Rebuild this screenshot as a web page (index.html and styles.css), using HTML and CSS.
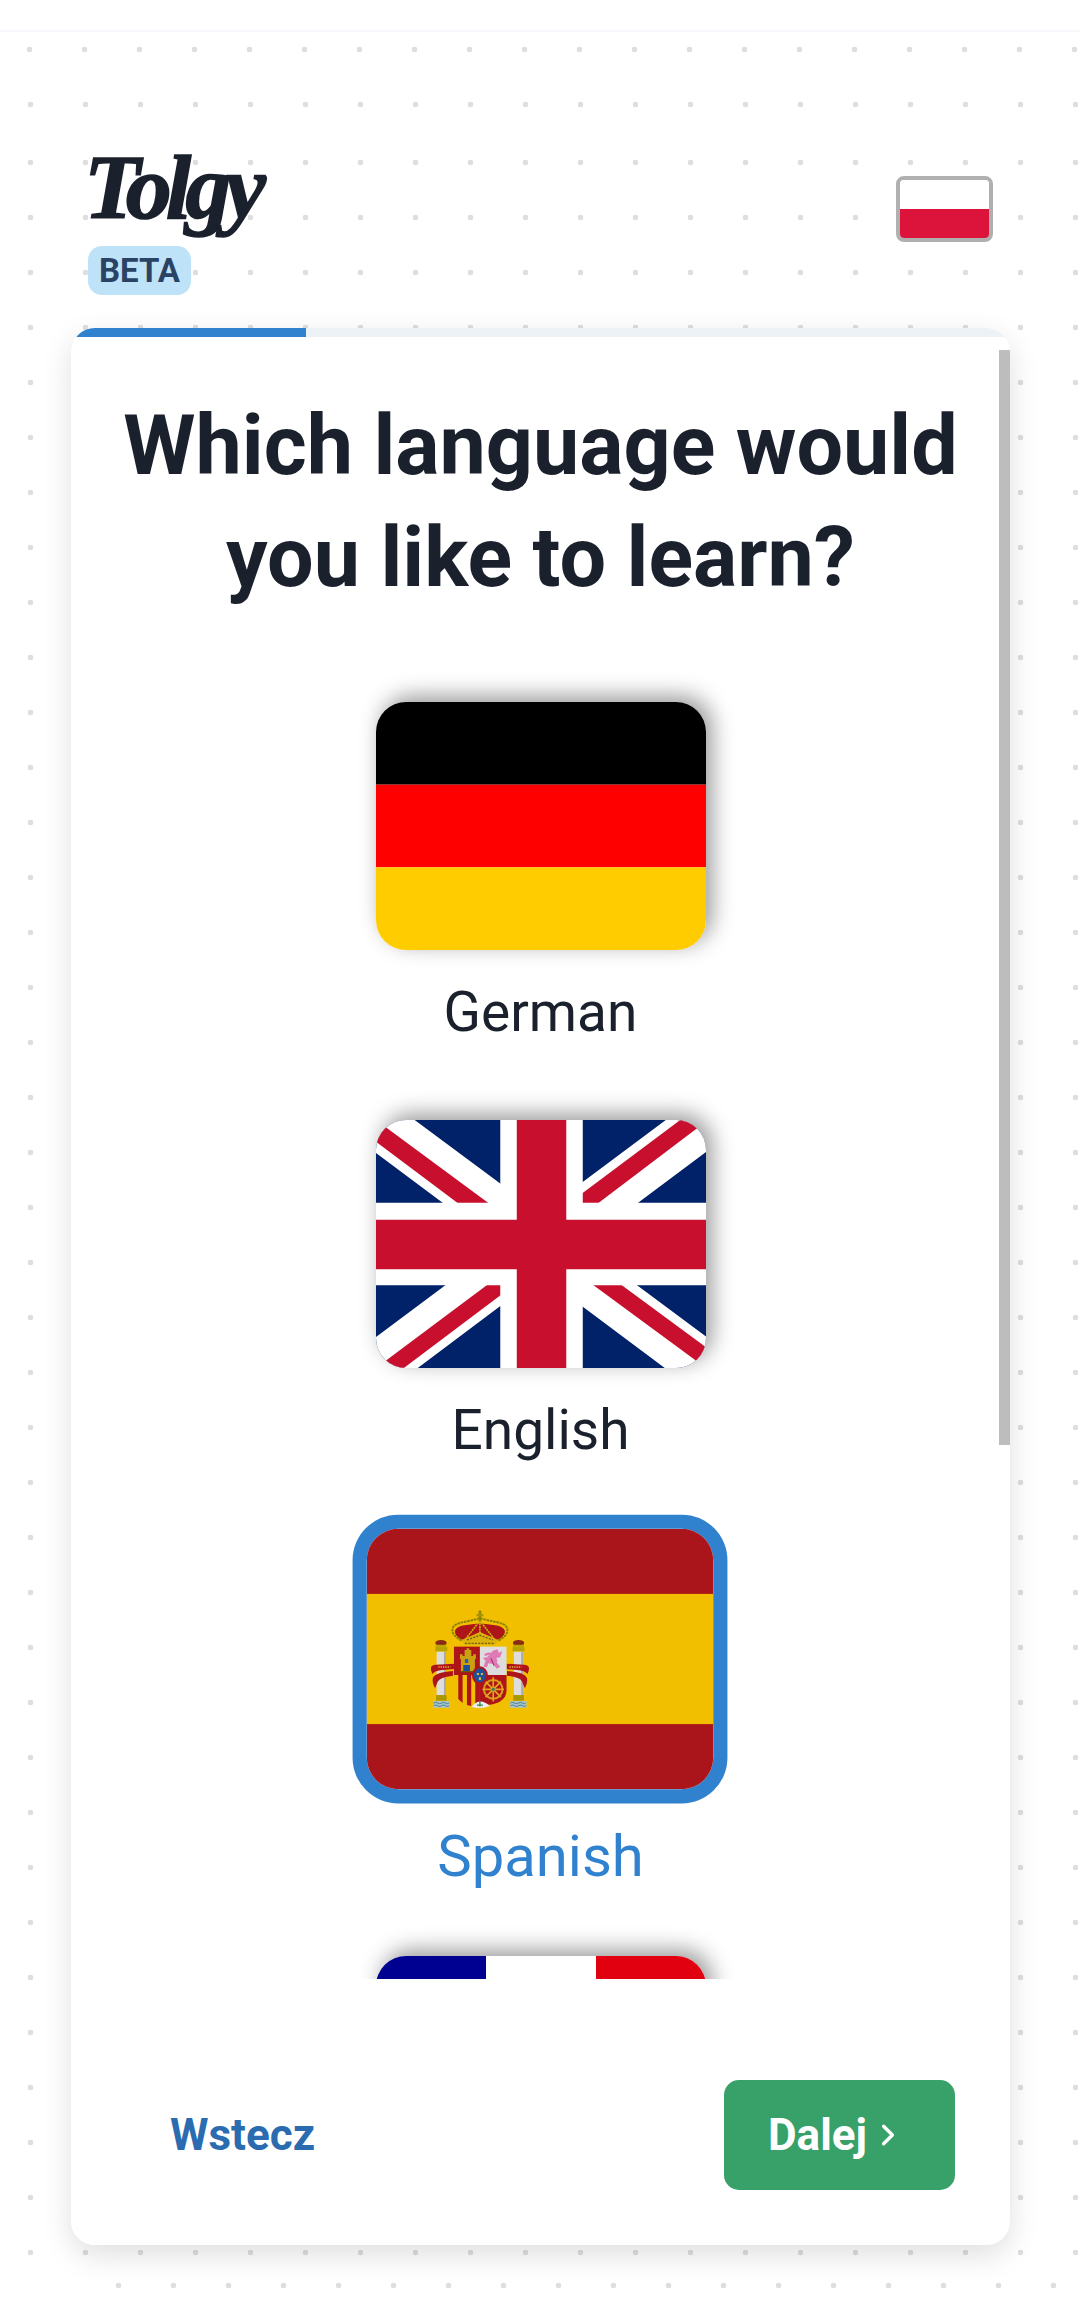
FILE: index.html
```html
<!DOCTYPE html>
<html lang="en">
<head>
<meta charset="utf-8">
<title>Tolgy</title>
<link rel="stylesheet" href="styles.css">
</head>
<body>
<div class="dots dots-main"></div>
<div class="dots dots-row-a"></div>
<div class="dots dots-row-b"></div>
<div class="dots dots-row-c"></div>
<div class="topbar"></div>
<header class="header">
  <div class="brand">
    <div class="logo">Tolgy</div>
    <span class="beta">BETA</span>
  </div>
  <div class="locale"><div class="locale-white"></div><div class="locale-red"></div></div>
</header>
<main class="card">
  <div class="progress"><div class="progress-fill"></div></div>
  <div class="scroller">
    <h1 class="title">Which language would<br>you like to learn?</h1>
    <div class="langs">
      <div class="lang">
        <div class="flag">
          <svg viewBox="0 0 3 3" preserveAspectRatio="none"><rect width="3" height="1" fill="#000"/><rect y="1" width="3" height="1" fill="#f00"/><rect y="2" width="3" height="1" fill="#fc0"/></svg>
        </div>
        <div class="lang-name">German</div>
      </div>
      <div class="lang">
        <div class="flag">
          <svg viewBox="0 0 640 480" preserveAspectRatio="none">
            <path fill="#012169" d="M0 0h640v480H0z"/>
            <path fill="#FFF" d="m75 0 244 181L562 0h78v62L400 241l240 178v61h-80L320 301 81 480H0v-60l239-178L0 64V0z"/>
            <path fill="#C8102E" d="m424 281 216 159v40L369 281zm-184 20 6 35L54 480H0zM640 0v3L391 191l2-44L590 0zM0 0l239 176h-60L0 42z"/>
            <path fill="#FFF" d="M241 0v480h160V0zM0 160v160h640V160z"/>
            <path fill="#C8102E" d="M0 193v96h640v-96zM273 0v480h96V0z"/>
          </svg>
        </div>
        <div class="lang-name">English</div>
      </div>
      <div class="lang lang-selected">
        <div class="flag">
          <svg viewBox="0 0 347 260" preserveAspectRatio="none">
            <rect width="347" height="260" fill="#aa151b"/>
            <rect y="65" width="347" height="130" fill="#f1bf00"/>
            <g transform="translate(45 61) scale(.3333)">
              <!-- pillars -->
              <rect x="75" y="185" width="28" height="130" fill="#ddd"/>
              <rect x="97" y="185" width="6" height="130" fill="#aaa"/>
              <rect x="307" y="185" width="28" height="130" fill="#ddd"/>
              <rect x="329" y="185" width="6" height="130" fill="#aaa"/>
              <rect x="71" y="171" width="36" height="13" fill="#b8a400"/>
              <rect x="303" y="171" width="36" height="13" fill="#b8a400"/>
              <rect x="73" y="315" width="32" height="17" fill="#ad9700"/>
              <rect x="305" y="315" width="32" height="17" fill="#ad9700"/>
              <rect x="64" y="333" width="49" height="20" fill="#a8c4cc"/>
              <rect x="296" y="333" width="49" height="20" fill="#a8c4cc"/>
              <path d="M66 339q6-4 12 0t12 0 12 0 10 0M66 347q6-4 12 0t12 0 12 0 10 0M297 339q6-4 12 0t12 0 12 0 10 0M297 347q6-4 12 0t12 0 12 0 10 0" fill="none" stroke="#1f5f73" stroke-width="2"/>
              <!-- small crowns -->
              <ellipse cx="88" cy="159" rx="17" ry="9" fill="#8a2a14"/>
              <path d="M72 164h32v6H72z" fill="#b8a400"/>
              <ellipse cx="321" cy="159" rx="17" ry="9" fill="#8a2a14"/>
              <path d="M305 164h32v6h-32z" fill="#b8a400"/>
              <!-- ribbons -->
              <path d="M58 232q3-8 14-8l56-3v16l-36 3q-22 2-30 12-6-12-4-20zM124 243v14q-40 4-46 18-2 6-8 20-10-20-6-32 8-16 60-20z" fill="#ad1519"/>
              <path d="M352 232q-3-8-14-8l-56-3v16l36 3q22 2 30 12 6-12 4-20zM286 243v14q40 4 46 18 2 6 8 20 10-20 6-32-8-16-60-20z" fill="#ad1519"/>
              <path d="M80 231h36M294 231h36" stroke="#e8b040" stroke-width="4" stroke-dasharray="4 3"/>
              <!-- great crown -->
              <path d="M130 122C138 102 175 106 205 100C235 106 272 102 280 122C282 135 268 148 255 150L155 150C142 148 128 135 130 122z" fill="#ad1519"/>
              <path d="M150 152Q118 135 123 116C128 94 170 98 205 84C240 98 282 94 287 116Q292 135 260 152" fill="none" stroke="#8f8400" stroke-width="6" stroke-dasharray="8 2"/>
              <path d="M205 92L160 150M205 92L250 150M205 92V130" fill="none" stroke="#c8b100" stroke-width="5" stroke-dasharray="6 2"/>
              <path d="M150 150L205 126L260 150L250 166H160z" fill="#d9b20c"/>
              <path d="M166 150l39-14 39 14M160 160h90" fill="none" stroke="#7a5a10" stroke-width="4" stroke-dasharray="6 4"/>
              <rect x="201" y="62" width="8" height="32" fill="#8f8400"/>
              <rect x="195" y="72" width="20" height="7" fill="#a89600"/>
              <!-- shield -->
              <path d="M127 170h158v125q0 55-79 55-79 0-79-55z" fill="#f1bf00"/>
              <rect x="127" y="170" width="78" height="85" fill="#ad1519"/>
              <rect x="205" y="170" width="80" height="85" fill="#ddd"/>
              <path d="M127 255h78v95q-78 0-78-55z" fill="#f1bf00"/>
              <path d="M140 255h13v84l-13-12zM166 255h13v93l-13-3zM191 255h14v93h-14z" fill="#ad1519"/>
              <path d="M205 255h80v45q0 46-80 46z" fill="#ad1519"/>
              <path d="M180 350q25-30 55-2-28 10-55 2z" fill="#eee"/>
              <path d="M205 333v16M196 345h18" stroke="#39805a" stroke-width="4"/>
              <!-- castle -->
              <path d="M148 245v-38h-3v-14h8v5h6v-18h6v-5h8v5h6v18h6v-5h8v14h-3v38z" fill="#c8a010"/>
              <path d="M155 245v-20h20v20z" fill="#1d4f9c"/>
              <path d="M160 207h10v12h-10z" fill="#2a5fb0"/>
              <path d="M146 245h38" stroke="#6b5a10" stroke-width="4"/>
              <!-- lion -->
              <path d="M218 192q8-6 20-4l6-6 14-4 4 10 10-4-6 18-12 2q6 6 2 14l10 12-10 6-12-14-14-2-4 12-10-2 6-18-8-8 12-2 8-8-14 4z" fill="#e07ab4"/>
              <path d="M238 205l10 22" stroke="#a03070" stroke-width="3"/>
              <!-- navarra chains -->
              <circle cx="245" cy="298" r="28" fill="none" stroke="#d99a1a" stroke-width="6"/>
              <path d="M245 262v72M213 298h64M222 275l46 46M268 275l-46 46" stroke="#e2a41e" stroke-width="5"/>
              <circle cx="245" cy="298" r="5" fill="#39805a"/>
              <!-- centre -->
              <ellipse cx="205" cy="256" rx="24" ry="27" fill="#ad1519"/>
              <ellipse cx="205" cy="256" rx="18" ry="21" fill="#1d4f9c"/>
              <path d="M196 249h6v6h-6zM208 249h6v6h-6zM202 262h6v8h-6z" fill="#e8c020"/>
            </g>
          </svg>
        </div>
        <div class="lang-name">Spanish</div>
      </div>
      <div class="lang">
        <div class="flag">
          <svg viewBox="0 0 3 3" preserveAspectRatio="none"><rect width="1" height="3" fill="#000091"/><rect x="1" width="1" height="3" fill="#fff"/><rect x="2" width="1" height="3" fill="#e1000f"/></svg>
        </div>
      </div>
    </div>
  </div>
  <div class="thumb"></div>
  <footer class="actions">
    <span class="back">Wstecz</span>
    <span class="next">Dalej
      <svg class="chev" viewBox="0 0 16 26"><path d="M3 3l10 10L3 23" fill="none" stroke="#fff" stroke-width="3.8" stroke-linecap="round" stroke-linejoin="round"/></svg>
    </span>
  </footer>
</main>
</body>
</html>
```
FILE: styles.css
```css
* { box-sizing: border-box; }
html, body { margin: 0; padding: 0; }
body {
  width: 1080px;
  height: 2300px;
  overflow: hidden;
  position: relative;
  background: #fff;
  font-family: Roboto, "Liberation Sans", sans-serif;
  color: #1a202c;
}
.dots {
  position: absolute;
  left: 0;
  right: 0;
  background-image: radial-gradient(circle, #dedede 2.6px, transparent 3.1px);
  background-size: 55px 55px;
  pointer-events: none;
}
.dots-main { top: 135px; height: 2133px; background-position: 3px 0; }
.dots-row-a { top: 22px; height: 55px; background-position: 2px 0; }
.dots-row-b { top: 77px; height: 55px; background-position: 3px 0; }
.dots-row-c { top: 2258px; left: 91px; right: 20px; height: 55px; background-position: 0 0; }

.topbar {
  position: relative;
  height: 32px;
  background: #fff;
  border-bottom: 2px solid #f7f7fc;
}
.header {
  position: relative;
  display: flex;
  justify-content: space-between;
  align-items: flex-start;
  height: 296px;
  padding: 97px 87px 0 84px;
}
.brand { display: flex; flex-direction: column; align-items: flex-start; }
.logo {
  font-family: "Liberation Serif", serif;
  font-style: italic;
  font-weight: 700;
  font-size: 92px;
  line-height: 117px;
  letter-spacing: -6px;
  color: #1a202c;
  -webkit-text-stroke: 1.5px #1a202c;
}
.beta {
  display: inline-flex;
  align-items: center;
  justify-content: center;
  width: 103px;
  height: 49px;
  margin-left: 4px;
  background: #bee3f8;
  color: #2a4365;
  border-radius: 14px;
  font-size: 33px;
  font-weight: 700;
}
.locale {
  display: flex;
  flex-direction: column;
  width: 97px;
  height: 66px;
  margin-top: 47px;
  border: 4px solid #b0b0b0;
  border-radius: 8px;
  overflow: hidden;
}
.locale-white { flex: 1; background: #fff; }
.locale-red { flex: 1; background: #dc143c; }

.card {
  position: relative;
  display: flex;
  flex-direction: column;
  width: 939px;
  height: 1917px;
  margin-left: 71px;
  background: #fff;
  border-radius: 24px;
  overflow: hidden;
  box-shadow: 0 10px 30px rgba(0, 0, 0, .13);
}
.progress {
  height: 9px;
  flex: none;
  background: #edf2f7;
}
.progress-fill { width: 235px; height: 100%; background: #3182ce; }
.scroller {
  flex: 1;
  min-height: 0;
  overflow: hidden;
  padding-top: 53px;
}
.title {
  margin: 0;
  text-align: center;
  font-size: 82.6px;
  line-height: 112px;
  font-weight: 700;
  color: #1a202c;
}
.langs {
  display: flex;
  flex-direction: column;
  align-items: center;
  margin-top: 88px;
}
.lang {
  display: flex;
  flex-direction: column;
  align-items: center;
  margin-bottom: 69px;
}
.flag {
  width: 330px;
  height: 248px;
  border-radius: 30px;
  overflow: hidden;
  box-shadow: 6px -6px 22px rgba(0, 0, 0, .4);
}
.flag svg { display: block; width: 100%; height: 100%; }
.lang-name {
  margin-top: 23px;
  font-size: 55px;
  line-height: 78px;
}
.lang-selected { margin-top: -3px; margin-bottom: 61px; }
.lang-selected .flag {
  transform: translateX(-1px) scale(1.05);
  box-shadow: 0 0 0 13.5px #3182ce;
}
.lang-selected .lang-name {
  margin-top: 34px;
  font-size: 58px;
  color: #3182ce;
}
.thumb {
  position: absolute;
  top: 22px;
  right: 0;
  width: 11px;
  height: 1095px;
  background: #bdbdbd;
}
.actions {
  display: flex;
  flex: none;
  justify-content: space-between;
  align-items: center;
  height: 266px;
  padding: 101px 55px 55px 99px;
  position: relative;
  background: #fff;
}
.back {
  font-size: 44px;
  font-weight: 700;
  color: #2b6cb0;
}
.next {
  display: flex;
  align-items: center;
  justify-content: flex-start;
  gap: 14px;
  width: 231px;
  height: 110px;
  padding-left: 44px;
  background: #38a169;
  border-radius: 15px;
  color: #fff;
  font-size: 44px;
  font-weight: 700;
}
.chev { width: 14px; height: 24px; }
```
